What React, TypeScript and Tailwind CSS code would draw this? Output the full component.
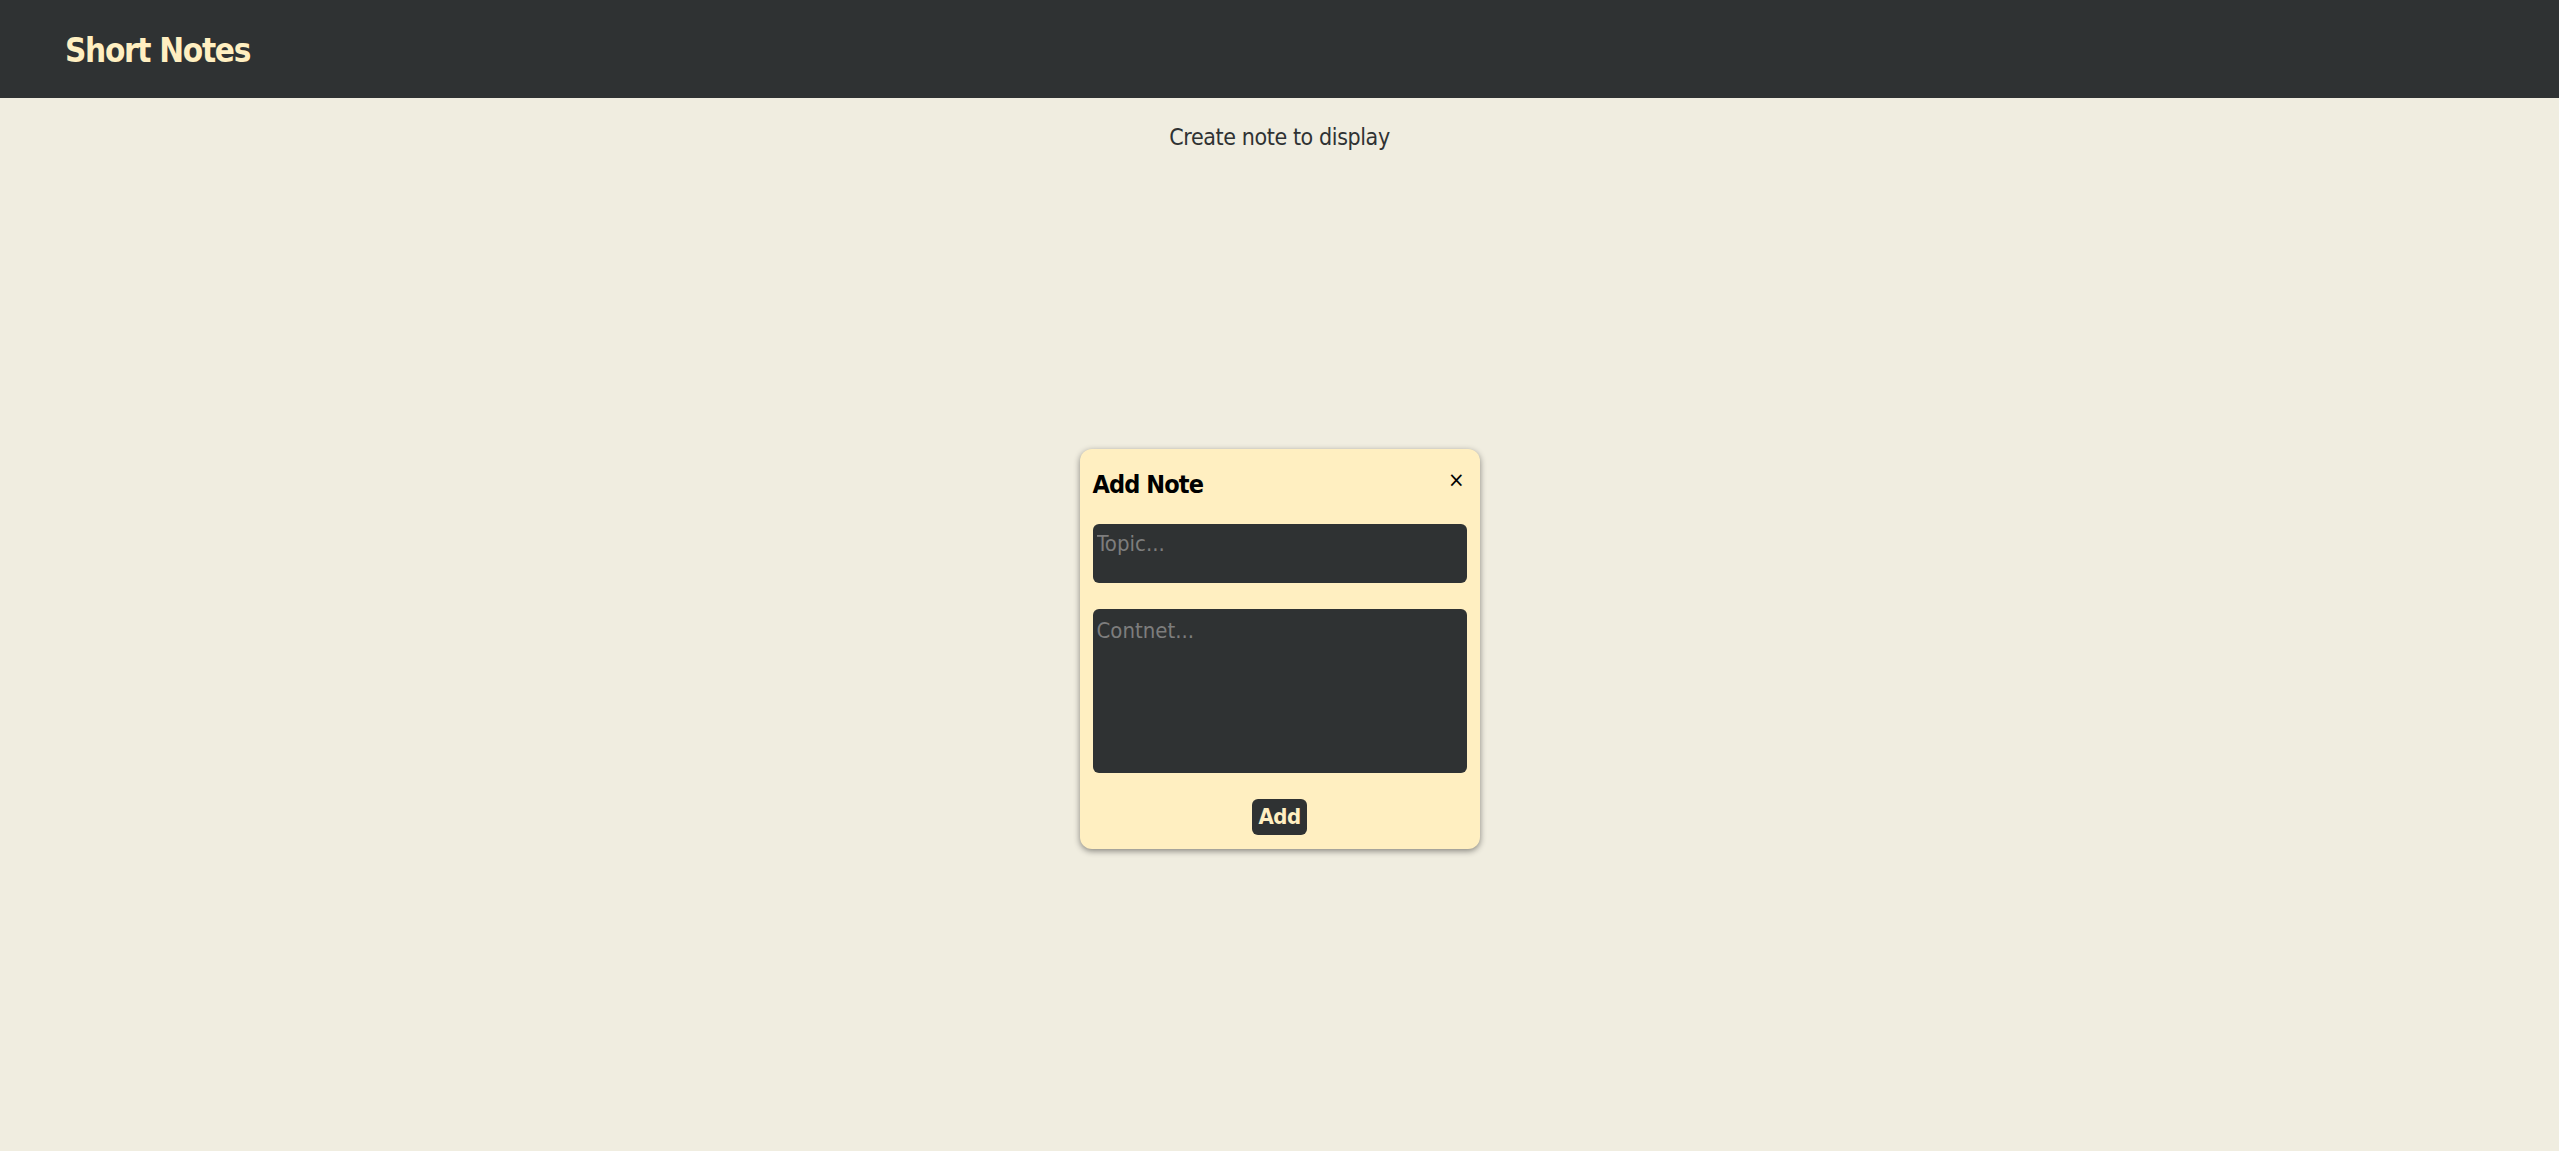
import { useState } from "react";

const font = {
  fontFamily: '"Liberation Sans Narrow", "DejaVu Sans Condensed", Roboto, sans-serif',
};

export default function App() {
  const [topic, setTopic] = useState("");
  const [content, setContent] = useState("");

  return (
    <div className="min-h-screen bg-[#f0ede0] text-[#2f3233]" style={font}>
      {/* Header */}
      <header className="h-[98px] bg-[#2f3233] flex items-center px-[65px] pt-[4px]">
        <h1 className="text-[33px] font-bold text-[#ffefc1] tracking-[-1.3px]">Short Notes</h1>
      </header>

      <main className="flex flex-col items-center">
        <p className="mt-[27px] text-[23px] leading-[24px] tracking-[-0.4px]">Create note to display</p>

        {/* Add note card */}
        <div className="mt-[300px] w-[400px] h-[400px] bg-[#ffefc1] rounded-[12px] shadow-[0_2px_6px_rgba(0,0,0,0.45)] px-[13px] pt-[18px] flex flex-col">
          <div className="flex items-start justify-between">
            <h2 className="text-[25px] leading-[36px] font-bold text-black tracking-[-0.9px]">Add Note</h2>
            <button className="text-[22px] leading-[22px] text-black mt-[2px] mr-[2px]">×</button>
          </div>
          <input
            value={topic}
            onChange={(e) => setTopic(e.target.value)}
            placeholder="Topic..."
            className="mt-[21px] h-[59px] w-full bg-[#2f3233] rounded-[6px] px-[4px] pb-[20px] text-[22px] text-[#ffefc1] placeholder:text-[#7d7d7d] outline-none"
          />
          <textarea
            value={content}
            onChange={(e) => setContent(e.target.value)}
            placeholder="Contnet..."
            className="mt-[26px] h-[164px] w-full bg-[#2f3233] rounded-[6px] px-[4px] pt-[5px] text-[22px] text-[#ffefc1] placeholder:text-[#7d7d7d] outline-none resize-none"
          />
          <div className="flex justify-center mt-[26px]">
            <button className="h-[36px] px-[6px] bg-[#2f3233] rounded-[6px] text-[22px] leading-[36px] font-bold text-[#ffefc1] tracking-[-0.5px]">
              Add
            </button>
          </div>
        </div>
      </main>
    </div>
  );
}
